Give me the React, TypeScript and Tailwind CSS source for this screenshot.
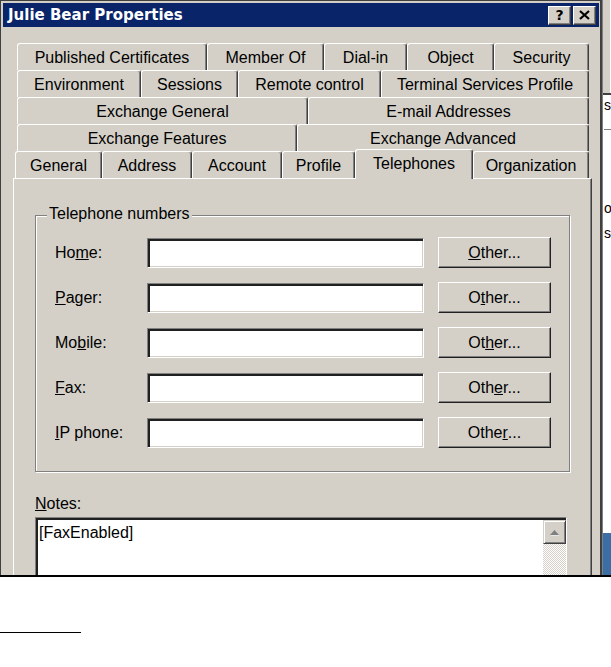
import React from "react";

type TabDef = { l: React.ReactNode; w: string; sel?: boolean };

const rows: TabDef[][] = [
  [
    { l: "Published Certificates", w: "w-[190px]" },
    { l: "Member Of", w: "w-[117px]" },
    { l: "Dial-in", w: "w-[83px]" },
    { l: "Object", w: "w-[87px]" },
    { l: "Security", w: "w-[95px]" },
  ],
  [
    { l: "Environment", w: "w-[124px]" },
    { l: "Sessions", w: "w-[97px]" },
    { l: "Remote control", w: "w-[143px]" },
    { l: "Terminal Services Profile", w: "w-[208px]" },
  ],
  [
    { l: "Exchange General", w: "w-[291px]" },
    { l: "E-mail Addresses", w: "w-[281px]" },
  ],
  [
    { l: "Exchange Features", w: "w-[280px]" },
    { l: "Exchange Advanced", w: "w-[292px]" },
  ],
];

const lastRow: TabDef[] = [
  { l: "General", w: "w-[87px]" },
  { l: "Address", w: "w-[90px]" },
  { l: "Account", w: "w-[90px]" },
  { l: "Profile", w: "w-[73px]" },
  { l: "Telephones", w: "w-[118px]", sel: true },
  { l: "Organization", w: "w-[116px]" },
];

function Tab({ t }: { t: TabDef }) {
  if (t.sel) {
    return (
      <div
        className={`${t.w} h-[30px] -mb-px relative z-10 shrink-0 flex justify-center items-start pt-[5px] leading-[18px] text-[16px] bg-[#d4d0c8] border-t border-l border-white border-r border-r-[#404040] rounded-t-[3px] shadow-[inset_-1px_0_0_#808080]`}
      >
        {t.l}
      </div>
    );
  }
  return (
    <div
      className={`${t.w} h-[27px] shrink-0 flex justify-center items-start pt-[5px] leading-[18px] text-[16px] border-t border-l border-white border-r border-r-[#404040] rounded-t-[3px] shadow-[inset_-1px_0_0_#808080]`}
    >
      {t.l}
    </div>
  );
}

function TitleBtn({ children }: { children: React.ReactNode }) {
  return (
    <div className="w-[23px] h-[19px] flex items-center justify-center bg-[#d4d0c8] border-t border-l border-white border-r border-b border-r-[#404040] border-b-[#404040] shadow-[inset_-1px_-1px_0_#808080]">
      {children}
    </div>
  );
}

const phoneRows: { label: React.ReactNode; btn: React.ReactNode }[] = [
  {
    label: (
      <>
        Ho<u>m</u>e:
      </>
    ),
    btn: (
      <>
        <u>O</u>ther...
      </>
    ),
  },
  {
    label: (
      <>
        <u>P</u>ager:
      </>
    ),
    btn: (
      <>
        O<u>t</u>her...
      </>
    ),
  },
  {
    label: (
      <>
        Mo<u>b</u>ile:
      </>
    ),
    btn: (
      <>
        Ot<u>h</u>er...
      </>
    ),
  },
  {
    label: (
      <>
        <u>F</u>ax:
      </>
    ),
    btn: (
      <>
        Oth<u>e</u>r...
      </>
    ),
  },
  {
    label: (
      <>
        <u>I</u>P phone:
      </>
    ),
    btn: (
      <>
        Othe<u>r</u>...
      </>
    ),
  },
];

export default function App() {
  return (
    <div className="w-[611px] h-[667px] bg-white text-black font-['Liberation_Sans',Arial,sans-serif]">
      <div className="flex h-[577px] overflow-hidden border-b-2 border-black">
        {/* Dialog */}
        <div className="w-[602px] shrink-0 h-full flex flex-col bg-[#d4d0c8] border-t border-l border-[#404040] border-r-2 border-r-[#404040] pt-[2px] pl-[2px] pr-px">
          {/* Title bar */}
          <div className="h-[24px] shrink-0 bg-[#0a246a] flex items-center pl-[5px] pr-[3px]">
            <span className="font-['DejaVu_Sans',sans-serif] font-bold text-[15px] text-white leading-none">
              Julie Bear Properties
            </span>
            <div className="ml-auto flex gap-[2px]">
              <TitleBtn>
                <span className="font-['DejaVu_Sans',sans-serif] font-bold text-[14px] leading-none">?</span>
              </TitleBtn>
              <TitleBtn>
                <svg width="11" height="10" viewBox="0 0 11 10">
                  <path d="M1 1 L10 9 M10 1 L1 9" stroke="#000" strokeWidth="2.2" />
                </svg>
              </TitleBtn>
            </div>
          </div>

          {/* Tabs */}
          <div className="mt-[16px] ml-[12px] w-[574px] flex flex-col shrink-0">
            {rows.map((r, i) => (
              <div key={i} className="flex pl-[2px] h-[27px]">
                {r.map((t, j) => (
                  <Tab key={j} t={t} />
                ))}
              </div>
            ))}
            <div className="flex items-end h-[27px]">
              {lastRow.map((t, j) => (
                <Tab key={j} t={t} />
              ))}
            </div>
          </div>

          {/* Panel */}
          <div className="ml-[10px] mr-[7px] flex-1 flex flex-col border-t border-l border-white border-r border-r-[#404040] shadow-[inset_-1px_0_0_#808080] text-[16px]">
            {/* Group box */}
            <div className="relative mt-[36px] ml-[21px] mr-[21px] border border-[#808080] shadow-[inset_1px_1px_0_#ffffff,1px_1px_0_#ffffff] pt-[21px] pb-[23px] pl-[19px] flex flex-col gap-[14px]">
              <div className="absolute -top-[11px] left-[11px] px-[2px] bg-[#d4d0c8] leading-[18px]">
                Telephone numbers
              </div>
              {phoneRows.map((r, i) => (
                <div key={i} className="flex items-center h-[31px]">
                  <div className="w-[92px] leading-[18px]">{r.label}</div>
                  <div className="w-[277px] h-[30px] bg-white border border-t-[#808080] border-l-[#808080] border-r-white border-b-white shadow-[inset_2px_2px_0_#202020,inset_-1px_-1px_0_#d4d0c8]" />
                  <div className="ml-[14px] w-[113px] h-[31px] flex items-center justify-center bg-[#d4d0c8] border-t border-l border-white border-r border-b border-r-[#202020] border-b-[#202020] shadow-[inset_-1px_-1px_0_#808080] leading-[18px]">
                    {r.btn}
                  </div>
                </div>
              ))}
            </div>

            {/* Notes */}
            <div className="mt-[23px] ml-[21px] leading-[18px]">
              <u>N</u>otes:
            </div>
            <div className="mt-[4px] ml-[21px] mr-[24px] h-[120px] flex bg-white border border-t-[#808080] border-l-[#808080] border-r-white border-b-white shadow-[inset_2px_2px_0_#202020]">
              <div className="flex-1 pl-[3px] pt-[6px] leading-[18px]">[FaxEnabled]</div>
              <div className="w-[23px] mt-[2px] flex flex-col">
                <div className="h-[24px] flex items-center justify-center bg-[#d4d0c8] border-t border-l border-[#d4d0c8] border-r border-b border-r-[#404040] border-b-[#404040] shadow-[inset_1px_1px_0_#ffffff,inset_-1px_-1px_0_#808080]">
                  <svg width="11" height="7" viewBox="0 0 11 7">
                    <path d="M1 6 L5.5 1 L10 6 Z" fill="#808080" />
                    <path d="M2 7 L10 7" stroke="#ffffff" strokeWidth="1" />
                  </svg>
                </div>
                <div className="flex-1 bg-[image:repeating-conic-gradient(#d4d0c8_0%_25%,#ffffff_0%_50%)] bg-[length:2px_2px]" />
              </div>
            </div>
          </div>
        </div>

        {/* Sliver of window behind */}
        <div className="w-[9px] shrink-0 h-full flex flex-col bg-[#d4d0c8] border-l border-[#808080]">
          <div className="h-[93px] shrink-0 border-r border-white" />
          <div className="flex-1 bg-white border-t-2 border-[#404040] overflow-hidden text-[14px] leading-[16px] pl-px">
            <div className="mt-[2px]">s</div>
            <div className="mt-[16px] h-px bg-[#808080]" />
            <div className="mt-[70px]">o</div>
            <div className="mt-[9px]">s</div>
          </div>
          <div className="h-[42px] shrink-0 bg-[#3a6ea5]" />
        </div>
      </div>
      <div className="mt-[55px] w-[81px] h-px bg-black" />
    </div>
  );
}
